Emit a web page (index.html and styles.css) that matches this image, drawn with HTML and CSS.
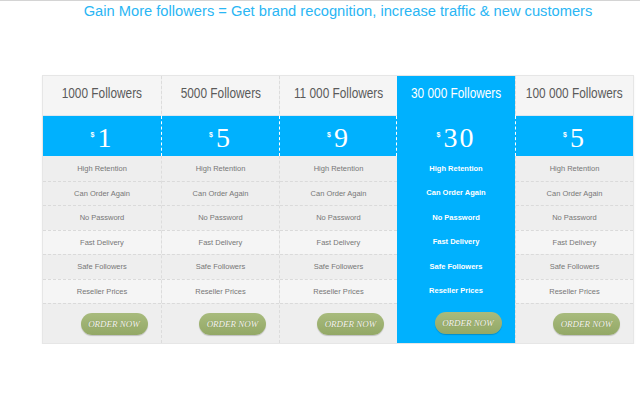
FILE: index.html
```html
<!DOCTYPE html>
<html>
<head>
<meta charset="utf-8">
<link rel="stylesheet" href="styles.css">
</head>
<body>
<div class="topline"></div>
<div class="page">
  <h1 class="title">Gain More followers = Get brand recognition, increase traffic &amp; new customers</h1>
  <div class="pricing">
    <div class="col">
      <div class="head"><span class="label">1000 Followers</span></div>
      <div class="price"><span class="cur">$</span><span class="num">1</span></div>
      <div class="feat dark">High Retention</div>
      <div class="feat dark">Can Order Again</div>
      <div class="feat dark">No Password</div>
      <div class="feat light">Fast Delivery</div>
      <div class="feat dark">Safe Followers</div>
      <div class="feat light">Reseller Prices</div>
      <div class="order"><a class="btn">ORDER NOW</a></div>
    </div>
    <div class="col">
      <div class="head"><span class="label">5000 Followers</span></div>
      <div class="price"><span class="cur">$</span><span class="num">5</span></div>
      <div class="feat dark">High Retention</div>
      <div class="feat dark">Can Order Again</div>
      <div class="feat dark">No Password</div>
      <div class="feat light">Fast Delivery</div>
      <div class="feat dark">Safe Followers</div>
      <div class="feat light">Reseller Prices</div>
      <div class="order"><a class="btn">ORDER NOW</a></div>
    </div>
    <div class="col">
      <div class="head"><span class="label">11 000 Followers</span></div>
      <div class="price"><span class="cur">$</span><span class="num">9</span></div>
      <div class="feat dark">High Retention</div>
      <div class="feat dark">Can Order Again</div>
      <div class="feat dark">No Password</div>
      <div class="feat light">Fast Delivery</div>
      <div class="feat dark">Safe Followers</div>
      <div class="feat light">Reseller Prices</div>
      <div class="order"><a class="btn">ORDER NOW</a></div>
    </div>
    <div class="col featured">
      <div class="head"><span class="label">30 000 Followers</span></div>
      <div class="price"><span class="cur">$</span><span class="num">30</span></div>
      <div class="feat">High Retention</div>
      <div class="feat">Can Order Again</div>
      <div class="feat">No Password</div>
      <div class="feat">Fast Delivery</div>
      <div class="feat">Safe Followers</div>
      <div class="feat">Reseller Prices</div>
      <div class="order"><a class="btn">ORDER NOW</a></div>
    </div>
    <div class="col">
      <div class="head"><span class="label">100 000 Followers</span></div>
      <div class="price"><span class="cur">$</span><span class="num">5</span></div>
      <div class="feat dark">High Retention</div>
      <div class="feat dark">Can Order Again</div>
      <div class="feat dark">No Password</div>
      <div class="feat light">Fast Delivery</div>
      <div class="feat dark">Safe Followers</div>
      <div class="feat light">Reseller Prices</div>
      <div class="order"><a class="btn">ORDER NOW</a></div>
    </div>
  </div>
</div>
</body>
</html>
```
FILE: styles.css
```css
html, body {
  margin: 0;
  padding: 0;
  background: #ffffff;
}
.topline {
  height: 1px;
  background: #d4d4d4;
}
.page {
  width: 592px;
  margin-left: 42px;
}
.title {
  margin: 0;
  padding-top: 1px;
  height: 74px;
  box-sizing: border-box;
  font-family: "Liberation Sans", Arial, sans-serif;
  font-weight: normal;
  font-size: 14.7px;
  line-height: 18px;
  color: #2ab6f4;
  text-align: center;
}
.pricing {
  display: flex;
  border: 1px solid #e6e6e6;
  box-shadow: 0 1px 2px rgba(0,0,0,0.06);
  background: #eeeeee;
}
.col {
  flex: 0 0 118px;
  min-width: 0;
  display: flex;
  flex-direction: column;
  box-sizing: border-box;
  border-left: 1px dashed #dcdcdc;
}
.col:first-child {
  border-left: none;
}
.head {
  height: 40px;
  box-sizing: border-box;
  padding-bottom: 7px;
  display: flex;
  align-items: center;
  justify-content: center;
  background: #f5f5f5;
  border-bottom: 1px solid #dfe6ee;
  font-family: "Liberation Sans", Arial, sans-serif;
  font-size: 15px;
  color: #5a5a5a;
  white-space: nowrap;
}
.label {
  display: inline-block;
  transform: scaleX(0.79);
}
.price {
  height: 40px;
  box-sizing: border-box;
  padding-top: 4px;
  display: flex;
  align-items: center;
  justify-content: center;
  background: #00b1fe;
  color: #ffffff;
  font-family: "Liberation Serif", serif;
  margin-left: -1px;
  border-left: 1px dashed #ffffff;
}
.col:first-child .price {
  margin-left: 0;
  border-left: none;
}
.cur {
  font-family: "Liberation Sans", sans-serif;
  font-weight: bold;
  font-size: 7px;
  align-self: flex-start;
  margin-top: 11px;
  margin-right: 3px;
}
.num {
  font-size: 28px;
  letter-spacing: 2px;
  line-height: 28px;
}
.feat {
  height: 24.5px;
  box-sizing: border-box;
  display: flex;
  align-items: center;
  justify-content: center;
  border-top: 1px dashed #dadada;
  font-family: "Liberation Sans", Arial, sans-serif;
  font-size: 7.5px;
  color: #777777;
}
.price + .feat {
  border-top: none;
}
.feat.dark { background: #eeeeee; }
.feat.light { background: #f5f5f5; }
.order {
  height: 40px;
  box-sizing: border-box;
  border-top: 1px dashed #dadada;
  background: #eeeeee;
  display: flex;
  align-items: center;
  justify-content: center;
  padding-left: 24px;
}
.btn {
  display: flex;
  align-items: center;
  justify-content: center;
  width: 67px;
  height: 22px;
  box-sizing: border-box;
  border-radius: 11px;
  background: linear-gradient(#a8bb7d, #93a866);
  box-shadow: 0 1px 1px rgba(0,0,0,0.2);
  font-family: "Liberation Serif", serif;
  font-style: italic;
  font-weight: normal;
  font-size: 9px;
  color: #f6f6ee;
  text-shadow: 0 0 1px rgba(60,70,30,0.4);
}
.col.featured {
  background: #00b1fe;
  border-left: none;
}
.col.featured .head {
  background: #00b1fe;
  color: #ffffff;
  border-bottom: none;
}
.col.featured .feat,
.col.featured .order {
  background: #00b1fe;
  border-top: none;
  color: #ffffff;
  font-weight: bold;
}
.col.featured .btn {
  font-weight: normal;
}
.col.featured + .col .price {
  border-left: 1px dashed #ffffff;
}
```
